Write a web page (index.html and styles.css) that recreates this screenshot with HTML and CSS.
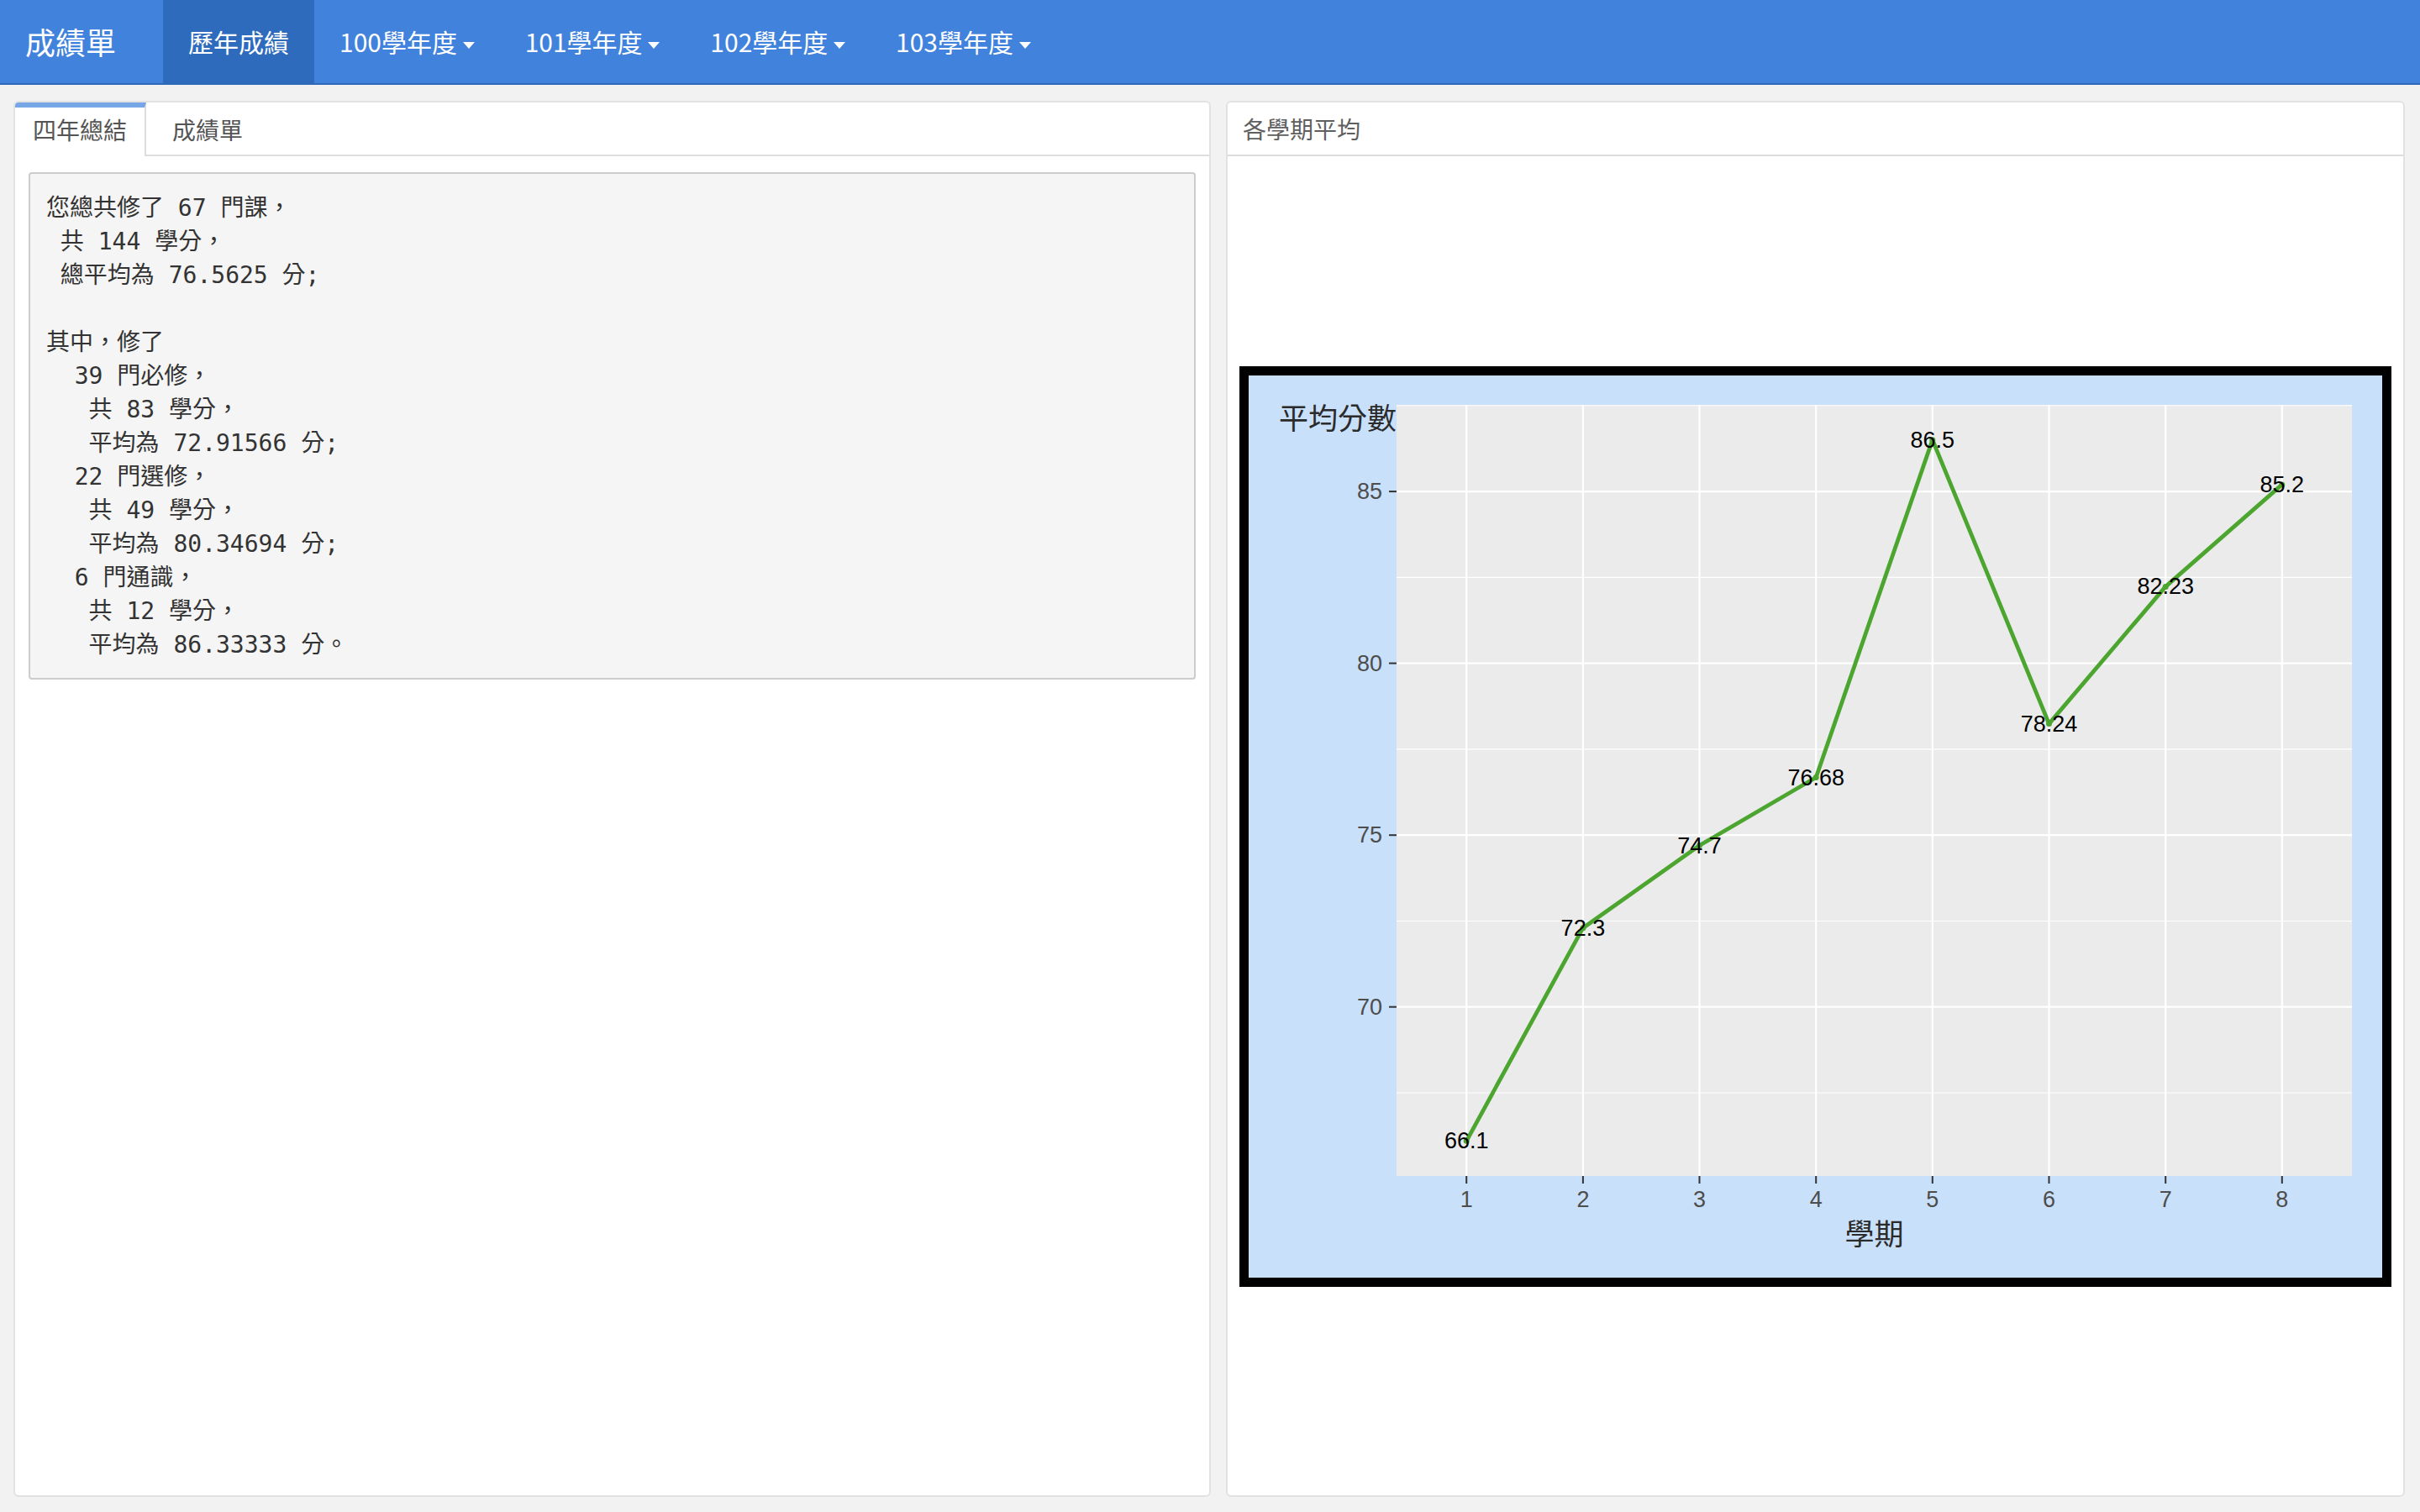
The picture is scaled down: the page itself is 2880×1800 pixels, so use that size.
FILE: index.html
```html
<!DOCTYPE html>
<html lang="zh-Hant">
<head>
<meta charset="utf-8">
<title>成績單</title>
<link rel="stylesheet" href="styles.css">
</head>
<body>
<nav class="navbar">
  <div class="brand">成績單</div>
  <ul class="nav">
    <li class="active"><a>歷年成績</a></li>
    <li><a>100學年度 <span class="caret"></span></a></li>
    <li><a>101學年度 <span class="caret"></span></a></li>
    <li><a>102學年度 <span class="caret"></span></a></li>
    <li><a>103學年度 <span class="caret"></span></a></li>
  </ul>
</nav>
<main class="content">
  <section class="panel tabbox">
    <ul class="tabs">
      <li class="active"><a>四年總結</a></li>
      <li><a>成績單</a></li>
    </ul>
    <div class="tab-body">
<pre class="summary">您總共修了 67 門課，
 共 144 學分，
 總平均為 76.5625 分;

其中，修了
  39 門必修，
   共 83 學分，
   平均為 72.91566 分;
  22 門選修，
   共 49 學分，
   平均為 80.34694 分;
  6 門通識，
   共 12 學分，
   平均為 86.33333 分。</pre>
    </div>
  </section>
  <section class="panel box">
    <div class="box-header">各學期平均</div>
    <div class="box-body">
      <div class="chart">
        <svg class="plot" width="1349" height="1074" viewBox="0 0 1349 1074" xmlns="http://www.w3.org/2000/svg">
          <rect x="176" y="35" width="1137" height="918" fill="#ebebeb"/>
          <g stroke="#ffffff" stroke-width="1.1">
            <line x1="176" x2="1313" y1="35.8" y2="35.8"/>
            <line x1="176" x2="1313" y1="240.4" y2="240.4"/>
            <line x1="176" x2="1313" y1="444.9" y2="444.9"/>
            <line x1="176" x2="1313" y1="649.5" y2="649.5"/>
            <line x1="176" x2="1313" y1="854" y2="854"/>
          </g>
          <g stroke="#ffffff" stroke-width="2.2">
            <line x1="176" x2="1313" y1="138.1" y2="138.1"/>
            <line x1="176" x2="1313" y1="342.6" y2="342.6"/>
            <line x1="176" x2="1313" y1="547.2" y2="547.2"/>
            <line x1="176" x2="1313" y1="751.7" y2="751.7"/>
            <line y1="35" y2="953" x1="259.2" x2="259.2"/>
            <line y1="35" y2="953" x1="397.9" x2="397.9"/>
            <line y1="35" y2="953" x1="536.5" x2="536.5"/>
            <line y1="35" y2="953" x1="675.2" x2="675.2"/>
            <line y1="35" y2="953" x1="813.8" x2="813.8"/>
            <line y1="35" y2="953" x1="952.5" x2="952.5"/>
            <line y1="35" y2="953" x1="1091.2" x2="1091.2"/>
            <line y1="35" y2="953" x1="1229.8" x2="1229.8"/>
          </g>
          <g stroke="#333333" stroke-width="2">
            <line x1="167" x2="176" y1="138.1" y2="138.1"/>
            <line x1="167" x2="176" y1="342.6" y2="342.6"/>
            <line x1="167" x2="176" y1="547.2" y2="547.2"/>
            <line x1="167" x2="176" y1="751.7" y2="751.7"/>
            <line y1="953" y2="962" x1="259.2" x2="259.2"/>
            <line y1="953" y2="962" x1="397.9" x2="397.9"/>
            <line y1="953" y2="962" x1="536.5" x2="536.5"/>
            <line y1="953" y2="962" x1="675.2" x2="675.2"/>
            <line y1="953" y2="962" x1="813.8" x2="813.8"/>
            <line y1="953" y2="962" x1="952.5" x2="952.5"/>
            <line y1="953" y2="962" x1="1091.2" x2="1091.2"/>
            <line y1="953" y2="962" x1="1229.8" x2="1229.8"/>
          </g>
          <g class="tick-text" text-anchor="end">
            <text x="159" y="138.1">85</text>
            <text x="159" y="342.6">80</text>
            <text x="159" y="547.2">75</text>
            <text x="159" y="751.7">70</text>
          </g>
          <g class="tick-text" text-anchor="middle">
            <text x="259.2" y="981">1</text>
            <text x="397.9" y="981">2</text>
            <text x="536.5" y="981">3</text>
            <text x="675.2" y="981">4</text>
            <text x="813.8" y="981">5</text>
            <text x="952.5" y="981">6</text>
            <text x="1091.2" y="981">7</text>
            <text x="1229.8" y="981">8</text>
          </g>
          <polyline fill="none" stroke="#4ca52e" stroke-width="4.8" stroke-linejoin="round" stroke-linecap="round"
            points="259.2,911.3 397.9,657.7 536.5,559.5 675.2,478.5 813.8,76.7 952.5,414.6 1091.2,251.4 1229.8,129.9"/>
          <g fill="#4ca52e">
            <circle cx="259.2" cy="911.3" r="3.5"/>
            <circle cx="397.9" cy="657.7" r="3.5"/>
            <circle cx="536.5" cy="559.5" r="3.5"/>
            <circle cx="675.2" cy="478.5" r="3.5"/>
            <circle cx="813.8" cy="76.7" r="3.5"/>
            <circle cx="952.5" cy="414.6" r="3.5"/>
            <circle cx="1091.2" cy="251.4" r="3.5"/>
            <circle cx="1229.8" cy="129.9" r="3.5"/>
          </g>
          <g class="point-text" text-anchor="middle">
            <text x="259.2" y="911.3">66.1</text>
            <text x="397.9" y="657.7">72.3</text>
            <text x="536.5" y="559.5">74.7</text>
            <text x="675.2" y="478.5">76.68</text>
            <text x="813.8" y="76.7">86.5</text>
            <text x="952.5" y="414.6">78.24</text>
            <text x="1091.2" y="251.4">82.23</text>
            <text x="1229.8" y="129.9">85.2</text>
          </g>
          <text class="axis-title" x="176" y="48" text-anchor="end">平均分數</text>
          <text class="axis-title" x="744.5" y="1019" text-anchor="middle">學期</text>
        </svg>
      </div>
    </div>
  </section>
</main>
</body>
</html>
```

FILE: styles.css
```css
* { box-sizing: border-box; }

html, body {
  margin: 0;
  padding: 0;
}

body {
  width: 2880px;
  height: 1800px;
  overflow: hidden;
  background: #f2f2f2;
  font-family: "Noto Sans CJK TC", "Noto Sans", sans-serif;
  color: #333333;
}

/* ---------- navbar ---------- */
.navbar {
  display: flex;
  align-items: stretch;
  height: 101px;
  background: #4182dc;
  border-bottom: 2px solid #2e69b9;
}

.brand {
  width: 194px;
  padding-left: 30px;
  font-size: 36px;
  line-height: 99px;
  color: #ffffff;
  white-space: nowrap;
}

.nav {
  display: flex;
  margin: 0;
  padding: 0;
  list-style: none;
}

.nav li a {
  display: block;
  padding: 0 30px;
  font-size: 30px;
  line-height: 99px;
  color: #ffffff;
  white-space: nowrap;
}

.nav li.active a {
  background: #2f6bbd;
}

.caret {
  display: inline-block;
  width: 0;
  height: 0;
  margin-left: 0;
  vertical-align: middle;
  border-top: 8px solid #ffffff;
  border-left: 7px solid transparent;
  border-right: 7px solid transparent;
}

/* ---------- content ---------- */
.content {
  display: flex;
  gap: 18px;
  height: 1699px;
  padding: 19px 18px 18px 16px;
}

.panel {
  background: #ffffff;
  border: 2px solid #e2e2e2;
  border-radius: 6px;
  overflow: hidden;
}

.tabbox {
  width: 1425px;
  flex: none;
}

.box {
  flex: 1;
}

/* tabs */
.tabs {
  display: flex;
  margin: 0;
  padding: 0;
  list-style: none;
  border-bottom: 2px solid #dddddd;
}

.tabs li {
  margin-right: 10px;
  border-top: 6px solid transparent;
  margin-bottom: -2px;
}

.tabs li a {
  display: block;
  padding: 0 21px 6px;
  font-size: 28px;
  line-height: 52px;
  color: #555555;
  white-space: nowrap;
}

.tabs li.active {
  border-top-color: #76a6e6;
  border-right: 2px solid #dddddd;
  background: #ffffff;
}

.tabs li.active a {
  border-bottom: 2px solid #ffffff;
  padding-bottom: 4px;
}

.tab-body {
  padding: 19px 16px 16px 16px;
}

.summary {
  margin: 0;
  padding: 21px 19px 19px;
  background: #f5f5f5;
  border: 2px solid #cccccc;
  border-radius: 4px;
  font-family: "DejaVu Sans Mono", "Noto Sans CJK TC", monospace;
  font-size: 28px;
  line-height: 40px;
  color: #333333;
  white-space: pre;
}

/* box */
.box-header {
  height: 64px;
  padding: 0 18px;
  font-size: 28px;
  line-height: 62px;
  color: #5f5f5f;
  border-bottom: 2px solid #dcdcdc;
}

.box-body {
  padding: 250px 14px 0;
}

.chart {
  border: 11px solid #000000;
  background: #c9e0fa;
}

.plot {
  display: block;
}

.tick-text text {
  font-family: "Liberation Sans", Arial, sans-serif;
  font-size: 27px;
  fill: #4d4d4d;
  dominant-baseline: central;
}

.point-text text {
  font-family: "Liberation Sans", Arial, sans-serif;
  font-size: 27px;
  fill: #000000;
  dominant-baseline: central;
}

.axis-title {
  font-family: "Noto Sans CJK TC", sans-serif;
  font-size: 35px;
  fill: #2b2b2b;
  dominant-baseline: central;
}
```
